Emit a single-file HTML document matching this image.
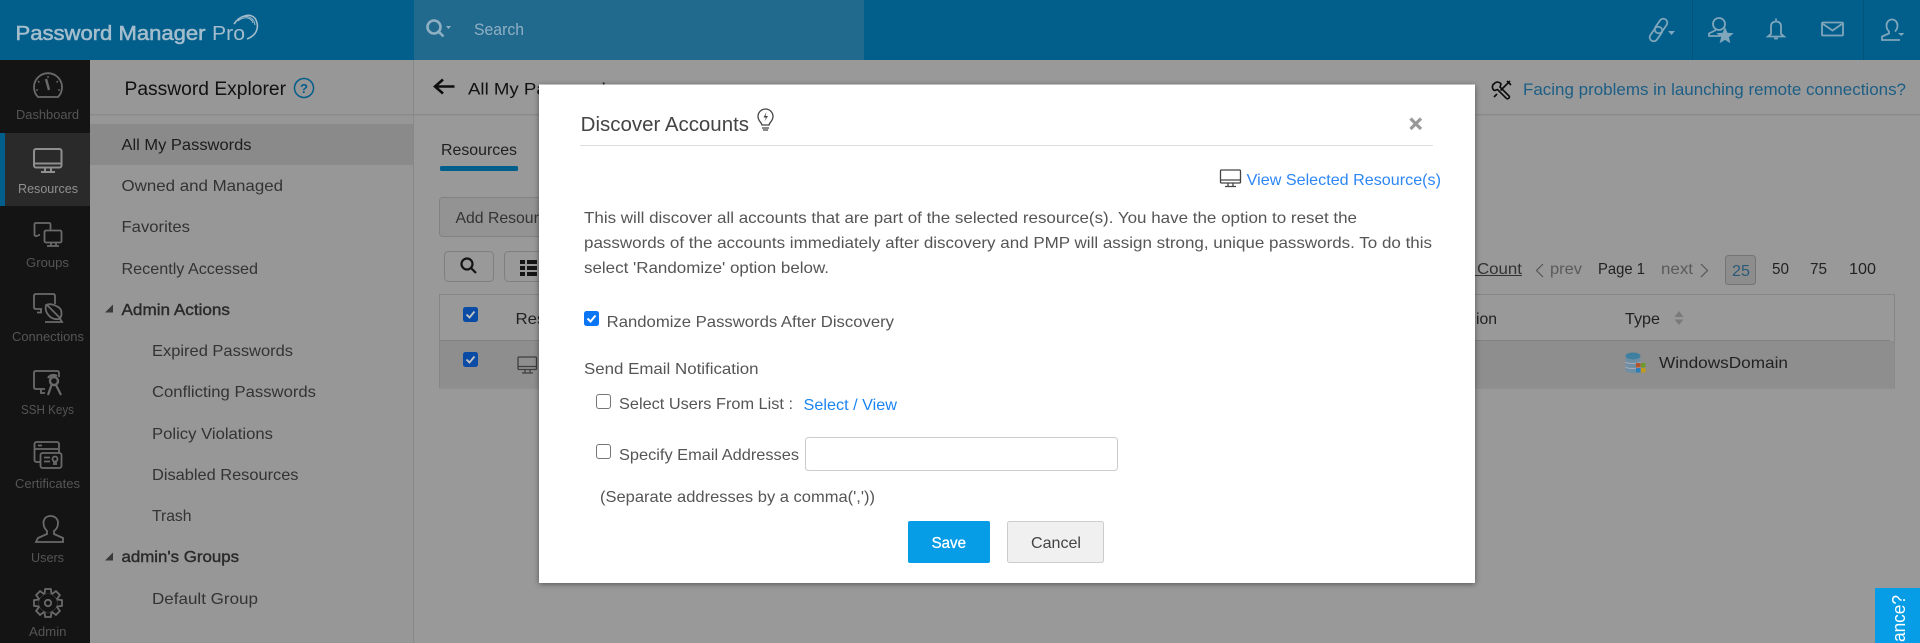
<!DOCTYPE html>
<html lang="en"><head><meta charset="utf-8"><title>Password Manager Pro</title>
<style>
html,body{margin:0;padding:0;width:1920px;height:643px;overflow:hidden;background:#999}
svg{display:block;position:absolute;left:0;top:0}
#tb{position:absolute;left:0;top:0;width:1920px;height:60px;background:#025e8b}
#sb{position:absolute;left:414px;top:0;width:450px;height:60px;background:#22698e}
#rl{position:absolute;left:0;top:60px;width:90px;height:583px;background:#141414}
#ra{position:absolute;left:0;top:133px;width:85px;height:73px;background:#2a2a2a;border-left:5px solid #025e8b}
text{font-family:"Liberation Sans",sans-serif;font-size:16px;fill:#333}
.r{font-size:13px;fill:#555}
.s{stroke:#2a2a2a;stroke-width:.4;fill:#2a2a2a}
.d{fill:#555}
.k{fill:#222}
</style></head><body>
<div id="tb"></div><div id="sb"></div><div id="rl"></div><div id="ra"></div>
<svg width="1920" height="643" viewBox="0 0 1920 643" xmlns="http://www.w3.org/2000/svg">
<!-- sidebar + content backgrounds -->
<rect x="90" y="60" width="323" height="583" fill="#979797"/>
<rect x="414" y="60" width="1506" height="583" fill="#999"/>
<rect x="413" y="60" width="1" height="583" fill="#888"/>
<rect x="90" y="114" width="1830" height="1.5" fill="#8b8b8b"/>
<rect x="90" y="124" width="323" height="41" fill="#8a8a8a"/>
<!-- top bar -->
<text x="15.5" y="40" textLength="190" lengthAdjust="spacingAndGlyphs" style="font-size:20px;fill:#a3bdcc;stroke:#a3bdcc;stroke-width:.55">Password Manager</text>
<text x="212" y="40" textLength="33" lengthAdjust="spacingAndGlyphs" style="font-size:20px;fill:#a3bdcc">Pro</text>
<g fill="none" stroke="#a3bdcc">
<path d="M234 24 C240 15 252 12 256 20 C260 29 255 36 247 39" stroke-width="1.6"/>
<path d="M238 21 C244 16 251 17 253 23" stroke-width="1"/>
<path d="M242 17 C248 15 254 18 255 25" stroke-width="1"/>
</g>
<g fill="none" stroke="#8fb0c3" stroke-width="2.6"><circle cx="434" cy="27" r="6.5"/><path d="M439 32l4.5 4.5"/></g>
<path d="M446 26h5l-2.500 3z" fill="#8fb0c3"/>
<text x="474" y="35" textLength="50" lengthAdjust="spacingAndGlyphs" style="font-size:17px;fill:#8fb0c3">Search</text>
<g fill="none" stroke="#015379"><path d="M1692.5 0v60M1863.5 0v60"/></g>
<g fill="none" stroke="#7fa6bb" stroke-width="1.8">
<rect x="-4" y="-8" width="8" height="16" rx="4" transform="translate(1661 26) rotate(35)"/>
<rect x="-4" y="-8" width="8" height="16" rx="4" transform="translate(1656 34) rotate(35)"/>
<circle cx="1719" cy="24" r="6"/><path d="M1716 30l-7 3.500v2.500h11"/>
<path d="M1776 18.5v2M1771 34v-8c0-6 10-6 10 0v8l3 2.500h-16zM1774 38.5h4"/>
<rect x="1822" y="22.5" width="21" height="13" rx="1"/><path d="M1823 24l9.500 6.500 9.500-6.500"/>
<path d="M1892 19.500c-3.500 0-5.500 3-5.500 6 0 3 1.500 5 2.500 6v2l-7 3v3.500h18M1892 19.500c3.500 0 5.500 3 5.500 6 0 3-1.500 5-2.500 6"/>
</g>
<path d="M1668 31h7l-3.500 4zM1898 33h6.500l-3.250 3zM1725 27l2.400 5.800 6.300.4-4.800 4 1.500 6-5.400-3.300-5.400 3.300 1.500-6-4.800-4 6.300-.4z" fill="#7fa6bb"/>
<!-- rail icons -->
<g fill="none" stroke="#6a6a6a" stroke-width="1.8">
<path d="M38 97H58A14 14 0 1 0 38 97Z"/>
<path d="M46 79l3 11" stroke-width="2.4"/><path d="M48 76v2M38 81l1.500 1.500M58 81l-1.500 1.500M36 90h2M58 90h2" stroke-width="1.3"/>
<path d="M38 236h-2q-1.500 0-1.500-1.500v-10q0-1.500 1.500-1.500h13q1.500 0 1.500 1.500v5"/>
<path d="M39 236v-2"/>
<rect x="44.5" y="230.500" width="17" height="12" rx="1.500"/><path d="M51 242.500v3M56 242.500v3M47 246h12"/>
<path d="M42 309h-6q-2 0-2-2v-11q0-2 2-2h17q2 0 2 2v8"/><path d="M41 309v3.500h-4M47 305l12 12"/>
<path d="M46 305a11.500 11.500 0 0 0 13 14c3-1 4-10-1-12-3-2-8-4-12-2z"/><path d="M45 322h17l-3-5"/>
<path d="M45 389h-9q-2 0-2-2v-14q0-2 2-2h21q2 0 2 2v4M41 389v4h4"/>
<circle cx="54" cy="381" r="4" stroke-width="2.4"/><path d="M51.500 385l-3.500 10M56 385l5 10M48 378c2-3 6-4 9-2" stroke-width="2.2"/>
<rect x="34.5" y="442" width="24.500" height="20" rx="2"/><path d="M35 449h23M38 445.500h4"/>
<rect x="40.5" y="453" width="21" height="15" rx="2" fill="#141414"/><path d="M44 457.500h6M44 461.500h6"/><circle cx="55" cy="459" r="2.500"/><path d="M54 461.500v3.500M56 461.500v3.500"/>
<path d="M34.500 541.500h27v-4l-9-4v-3c3-2 4-5 4-8 0-4-3-7-7.500-7s-7 3-7 7c0 3 1.500 6 3.500 8v3l-9 4z" transform="translate(1.5 .5)"/>
</g>
<g fill="none" stroke="#8f8f8f" stroke-width="2"><rect x="34" y="149" width="27.500" height="18.500" rx="2"/></g>
<path d="M34 162.500h27v2H34zM44 167h2v4h-2zM50 167h2v4h-2zM41 171h14v2H41z" fill="#8f8f8f"/>
<g transform="translate(48 603)" fill="#141414" stroke="#6a6a6a" stroke-width="1.8">
<circle r="10"/>
<path d="M-3.500-9.300L-2.800-14H2.800L3.500-9.300"/>
<path d="M-3.500-9.300L-2.800-14H2.800L3.500-9.300" transform="rotate(45)"/>
<path d="M-3.500-9.300L-2.800-14H2.800L3.500-9.300" transform="rotate(90)"/>
<path d="M-3.500-9.300L-2.800-14H2.800L3.500-9.300" transform="rotate(135)"/>
<path d="M-3.500-9.300L-2.800-14H2.800L3.500-9.300" transform="rotate(180)"/>
<path d="M-3.500-9.300L-2.800-14H2.800L3.500-9.300" transform="rotate(225)"/>
<path d="M-3.500-9.300L-2.800-14H2.800L3.500-9.300" transform="rotate(270)"/>
<path d="M-3.500-9.300L-2.800-14H2.800L3.500-9.300" transform="rotate(315)"/>
<circle r="3.2"/>
</g>
<text class="r" x="16" y="119" textLength="63" lengthAdjust="spacingAndGlyphs">Dashboard</text>
<text class="r" x="18" y="193" textLength="60" lengthAdjust="spacingAndGlyphs" style="fill:#909090">Resources</text>
<text class="r" x="26" y="267" textLength="43" lengthAdjust="spacingAndGlyphs">Groups</text>
<text class="r" x="12" y="341" textLength="72" lengthAdjust="spacingAndGlyphs">Connections</text>
<text class="r" x="21" y="414" textLength="53" lengthAdjust="spacingAndGlyphs">SSH Keys</text>
<text class="r" x="15" y="488" textLength="65" lengthAdjust="spacingAndGlyphs">Certificates</text>
<text class="r" x="31" y="562" textLength="33" lengthAdjust="spacingAndGlyphs">Users</text>
<text class="r" x="29" y="636" textLength="37.5" lengthAdjust="spacingAndGlyphs">Admin</text>
<!-- sidebar -->
<text x="124.5" y="95" textLength="161.5" lengthAdjust="spacingAndGlyphs" style="font-size:19px;fill:#111">Password Explorer</text>
<circle cx="304" cy="88" r="9.5" fill="none" stroke="#025e8b" stroke-width="1.5"/>
<text x="300" y="93" textLength="8" lengthAdjust="spacingAndGlyphs" style="font-size:13px;fill:#025e8b;font-weight:bold">?</text>
<text x="121.5" y="150" textLength="130" lengthAdjust="spacingAndGlyphs" style="fill:#1c1c1c">All My Passwords</text>
<text x="121.5" y="191" textLength="161.5" lengthAdjust="spacingAndGlyphs">Owned and Managed</text>
<text x="121.5" y="232" textLength="68.5" lengthAdjust="spacingAndGlyphs">Favorites</text>
<text x="121.5" y="274" textLength="136.5" lengthAdjust="spacingAndGlyphs">Recently Accessed</text>
<path d="M105 312.5h8v-8z M105 560.5h8v-8z" fill="#3a3a3a"/>
<text class="s" x="121.5" y="315" textLength="108.5" lengthAdjust="spacingAndGlyphs">Admin Actions</text>
<text x="152" y="356" textLength="141" lengthAdjust="spacingAndGlyphs">Expired Passwords</text>
<text x="152" y="397" textLength="164" lengthAdjust="spacingAndGlyphs">Conflicting Passwords</text>
<text x="152" y="439" textLength="121" lengthAdjust="spacingAndGlyphs">Policy Violations</text>
<text x="152" y="480" textLength="146.5" lengthAdjust="spacingAndGlyphs">Disabled Resources</text>
<text x="152" y="521" textLength="39.5" lengthAdjust="spacingAndGlyphs">Trash</text>
<text class="s" x="121.5" y="562" textLength="117.5" lengthAdjust="spacingAndGlyphs">admin's Groups</text>
<text x="152" y="604" textLength="106" lengthAdjust="spacingAndGlyphs">Default Group</text>
<!-- content -->
<path d="M435 86.5h19.5" stroke="#0d0d0d" stroke-width="2.6" fill="none"/>
<path d="M443 79.5l-8 7 8 7" stroke="#0d0d0d" stroke-width="2.6" fill="none"/>
<text x="468" y="94.5" textLength="147" lengthAdjust="spacingAndGlyphs" style="font-size:17px;fill:#111">All My Passwords</text>
<text x="441" y="155" textLength="76" lengthAdjust="spacingAndGlyphs" style="fill:#1f1f1f">Resources</text>
<rect x="440" y="166" width="78" height="5" rx="1.5" fill="#025e8b"/>
<rect x="439.5" y="197.5" width="200" height="39" rx="3" fill="#939393" stroke="#828282"/>
<text x="455.5" y="223" textLength="100" lengthAdjust="spacingAndGlyphs">Add Resource</text>
<rect x="444.5" y="251.5" width="49" height="30" rx="4" fill="#999" stroke="#7f7f7f"/>
<g fill="none" stroke="#141414" stroke-width="2.2"><circle cx="467" cy="264" r="5.5"/><path d="M471 268l5 5"/></g>
<rect x="504.5" y="251.5" width="49" height="30" rx="4" fill="#999" stroke="#7f7f7f"/>
<path d="M520 270h5v4h-5zM520 276h5v4h-5zM520 264h5v4h-5zM527 264h10v4h-10zM527 270h10v4h-10zM527 276h10v4h-10z" fill="#141414" transform="translate(0 -4)"/>
<!-- table -->
<rect x="439.5" y="294.5" width="1455" height="93.5" fill="#999" stroke="#868686"/>
<rect x="440" y="341" width="1454.5" height="47" fill="#8e8e8e"/>
<rect x="440" y="340" width="1450" height="1" fill="#828282"/>
<rect x="463" y="307" width="15" height="15" rx="2.5" fill="#0a4ca5"/>
<rect x="463" y="352" width="15" height="15" rx="2.5" fill="#0a4ca5"/>
<path d="M466.5 314.5l3 3 5-6M466.500 359.500l3 3 5-6" fill="none" stroke="#c4c4c4" stroke-width="1.8"/>
<text x="515.5" y="324" textLength="72" lengthAdjust="spacingAndGlyphs" class="k">Resource</text>
<g fill="none" stroke="#3f3f3f" stroke-width="1.3"><rect x="518" y="357" width="18.5" height="12.5" rx="1"/><path d="M518 366.500h18.5M525 369.500v3M530 369.500v3M522 373h11"/></g>
<path d="M1475 275.5h47" stroke="#333" stroke-width="1"/>
<text x="1477" y="274" textLength="45" lengthAdjust="spacingAndGlyphs">Count</text>
<path d="M1543 264l-6.500 6.500 6.500 6.500M1701 264l6.500 6.500-6.500 6.500" fill="none" stroke="#555" stroke-width="1.2"/>
<text class="d" x="1550" y="274" textLength="32" lengthAdjust="spacingAndGlyphs" style="fill:#5a5a5a">prev</text>
<text class="k" x="1598" y="274" textLength="47" lengthAdjust="spacingAndGlyphs">Page 1</text>
<text class="d" x="1661" y="274" textLength="32" lengthAdjust="spacingAndGlyphs" style="fill:#5a5a5a">next</text>
<rect x="1725.5" y="255.5" width="30" height="29" rx="3" fill="#8d8d8d" stroke="#747474"/>
<text x="1732" y="276" textLength="18" lengthAdjust="spacingAndGlyphs" style="fill:#2b5a78">25</text>
<text class="k" x="1772" y="274" textLength="17" lengthAdjust="spacingAndGlyphs">50</text>
<text class="k" x="1810" y="274" textLength="17" lengthAdjust="spacingAndGlyphs">75</text>
<text class="k" x="1849" y="274" textLength="27" lengthAdjust="spacingAndGlyphs">100</text>
<text x="1476" y="324" textLength="21" lengthAdjust="spacingAndGlyphs" class="k">ion</text>
<text x="1625" y="324" textLength="35" lengthAdjust="spacingAndGlyphs" class="k">Type</text>
<path d="M1674.500 317l4.500-6 4.500 6zM1674.500 319.500h9l-4.500 5.500z" fill="#7a7a7a"/>
<ellipse cx="1633" cy="356" rx="7.5" ry="3.5" fill="#3f7fa0"/>
<path d="M1625.500 356v14c0 2 3.500 3 7.500 3s7.500-1 7.500-3v-14c0 2-3.500 3.500-7.500 3.500s-7.500-1.500-7.500-3.500z" fill="#6e8fa3"/>
<path d="M1625.500 362c2 2 13 2 15 0M1625.500 367c2 2 13 2 15 0" stroke="#aab" fill="none" stroke-width="1"/>
<rect x="1636" y="363" width="4.5" height="4.5" fill="#b4562c"/><rect x="1641" y="363" width="4.5" height="4.5" fill="#6d9a2a"/><rect x="1636" y="368" width="4.5" height="4.5" fill="#2a7fb8"/><rect x="1641" y="368" width="4.5" height="4.5" fill="#c39a1e"/>
<text x="1659" y="368" textLength="129" lengthAdjust="spacingAndGlyphs" class="k">WindowsDomain</text>
<!-- tools + link -->
<g fill="none" stroke="#0c0c0c" stroke-width="1.6"><path d="M1494 84c2-3 6-2 7 0l-1 3 9 9c1.500 1.500-1 3.500-2.500 2.500l-9-9-3 1c-2-1-3-4-1-6.500z"/><path d="M1510 81l-9.500 9.500M1507 81l4 4M1497 94l-3 3"/></g>
<text x="1523" y="95" textLength="383" lengthAdjust="spacingAndGlyphs" style="font-size:17px;fill:#1c5e85">Facing problems in launching remote connections?</text>
<!-- help tab -->
<rect x="1875" y="588" width="45" height="55" fill="#069de6"/>
<text transform="translate(1905 642) rotate(-90)" x="0" y="0" textLength="47" lengthAdjust="spacingAndGlyphs" style="font-size:18px;fill:#fff">ance?</text>
<!-- dialog -->
<rect x="539" y="84.5" width="936" height="498.5" fill="#fff" style="filter:drop-shadow(0 1px 3px rgba(0,0,0,.45))"/>
<text x="580.7" y="131" textLength="168.3" lengthAdjust="spacingAndGlyphs" style="font-size:20px;fill:#444">Discover Accounts</text>
<g fill="none" stroke="#444" stroke-width="1.3"><path d="M762 125c0-2-4-4-4-8.500a7.500 7.500 0 0 1 15 0c0 4.500-4 6.500-4 8.500z"/><path d="M762 128h7M763 130h5"/></g>
<path d="M766.500 112l-3 5.500h2.500l-1.500 4 3.500-5.500h-2.500z" fill="#444"/>
<rect x="580" y="145" width="853" height="1" fill="#ddd"/>
<path d="M1410.500 118.500l10.500 10.500M1421 118.500l-10.500 10.500" stroke="#999" stroke-width="3.2" fill="none"/>
<g fill="none" stroke="#444" stroke-width="1.3"><rect x="1220.5" y="170" width="20" height="13" rx="1"/><path d="M1220.500 180h20M1228 183v3M1233 183v3M1225 186.500h11"/></g>
<text x="1246.7" y="185" textLength="194.3" lengthAdjust="spacingAndGlyphs" style="fill:#2e86f5">View Selected Resource(s)</text>
<text class="d" x="584" y="223" textLength="773" lengthAdjust="spacingAndGlyphs">This will discover all accounts that are part of the selected resource(s). You have the option to reset the</text>
<text class="d" x="584" y="248" textLength="848" lengthAdjust="spacingAndGlyphs">passwords of the accounts immediately after discovery and PMP will assign strong, unique passwords. To do this</text>
<text class="d" x="584" y="273" textLength="245" lengthAdjust="spacingAndGlyphs">select 'Randomize' option below.</text>
<rect x="584" y="311" width="15" height="15" rx="2.5" fill="#0a76f6"/>
<path d="M587.500 318.500l3 3 5-6" fill="none" stroke="#fff" stroke-width="2"/>
<text class="d" x="606.7" y="327" textLength="287.3" lengthAdjust="spacingAndGlyphs">Randomize Passwords After Discovery</text>
<text class="d" x="584" y="374" textLength="174.5" lengthAdjust="spacingAndGlyphs">Send Email Notification</text>
<rect x="596.5" y="394.5" width="14" height="14" rx="2.5" fill="#fff" stroke="#767676"/>
<text class="d" x="619" y="409" textLength="174" lengthAdjust="spacingAndGlyphs">Select Users From List :</text>
<text x="803.5" y="410" textLength="93.5" lengthAdjust="spacingAndGlyphs" style="fill:#1a85f0">Select / View</text>
<rect x="596.5" y="444.5" width="14" height="14" rx="2.5" fill="#fff" stroke="#767676"/>
<text class="d" x="619" y="460" textLength="180" lengthAdjust="spacingAndGlyphs">Specify Email Addresses</text>
<rect x="805.5" y="437.5" width="312" height="33" rx="3" fill="#fff" stroke="#ccc"/>
<text class="d" x="600" y="502" textLength="275" lengthAdjust="spacingAndGlyphs">(Separate addresses by a comma(','))</text>
<rect x="908" y="521" width="82" height="42" rx="2" fill="#069de6"/>
<text x="931.6" y="548" textLength="34.4" lengthAdjust="spacingAndGlyphs" style="fill:#fff;stroke:#fff;stroke-width:.3">Save</text>
<rect x="1007.5" y="521.5" width="96" height="41" rx="2" fill="#f0f0f0" stroke="#ccc"/>
<text x="1031" y="548" textLength="50" lengthAdjust="spacingAndGlyphs" style="fill:#444">Cancel</text>
</svg>
</body></html>
